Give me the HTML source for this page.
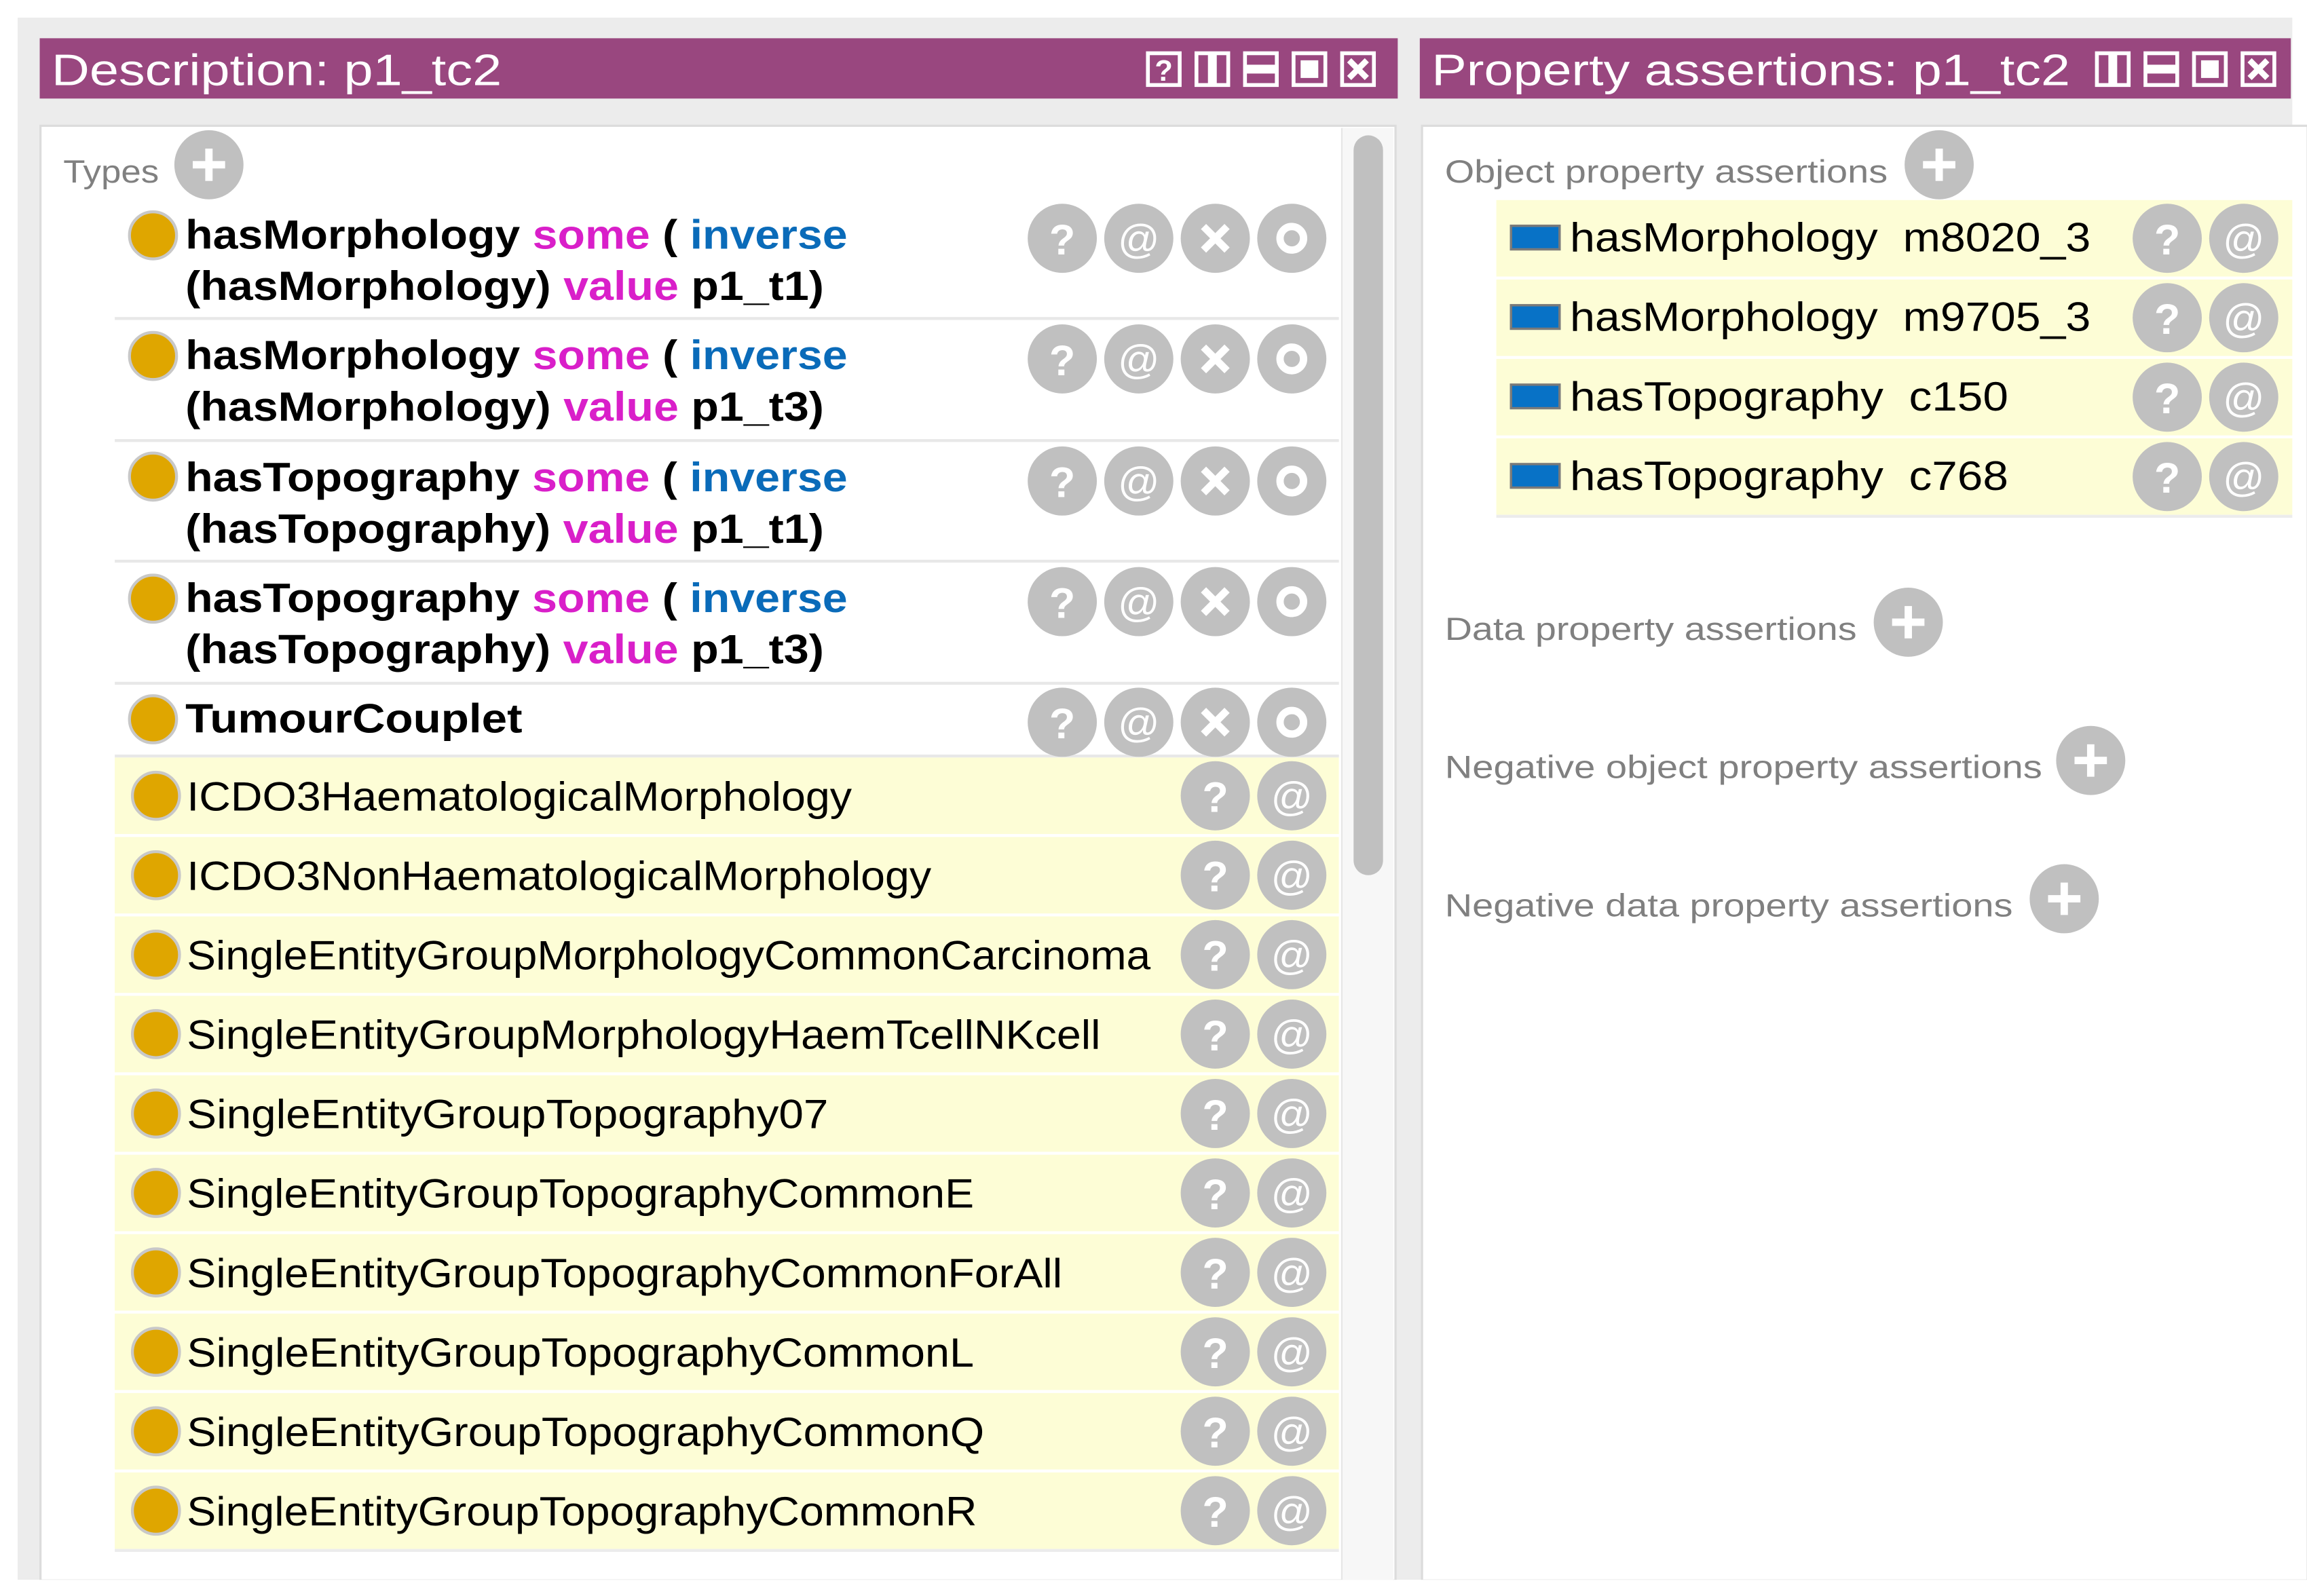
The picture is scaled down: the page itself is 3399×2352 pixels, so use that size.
<!DOCTYPE html>
<html><head><meta charset="utf-8"><style>
html,body{margin:0;padding:0;background:#fff;}
svg{display:block;}
text{font-family:"Liberation Sans",sans-serif;}
</style></head><body>
<svg xmlns="http://www.w3.org/2000/svg" xmlns:xlink="http://www.w3.org/1999/xlink" width="3399" height="2352" viewBox="0 0 1568 1085" preserveAspectRatio="none">
<defs>
  <g id="q"><circle r="23.5" fill="#c0c0c0"/><text y="11" text-anchor="middle" font-size="29" font-weight="bold" fill="#fff">?</text></g>
  <g id="at"><circle r="23.5" fill="#c0c0c0"/><text y="10" text-anchor="middle" font-size="28" fill="#fff">@</text></g>
  <g id="x"><circle r="23.5" fill="#c0c0c0"/><path d="M-8,-8L8,8M8,-8L-8,8" stroke="#fff" stroke-width="5"/></g>
  <g id="o"><circle r="23.5" fill="#c0c0c0"/><circle r="8" fill="none" stroke="#fff" stroke-width="5"/></g>
  <g id="plus"><circle r="23.5" fill="#c0c0c0"/><path d="M-11,0H11M0,-11V11" stroke="#fff" stroke-width="5"/></g>
  <g id="dot"><circle r="16" fill="#dfa600" stroke="#c8c8c8" stroke-width="2"/></g>
  <g id="blue"><rect x="1027" y="153.5" width="33" height="16" fill="#0872c6" stroke="#7a7a7a" stroke-width="1.6"/></g>
  <g id="ib"><rect x="1.2" y="1.2" width="21.6" height="21.6" fill="none" stroke="#fff" stroke-width="2.6"/></g>
</defs>
<rect width="1568" height="1085" fill="#fff"/>
<rect x="12" y="12" width="1546" height="1062" fill="#ececec"/>
<rect x="27" y="26" width="923" height="41" fill="#99477f"/>
<text x="35" y="58" font-size="30" fill="#fff" textLength="306" lengthAdjust="spacingAndGlyphs">Description: p1_tc2</text>
<rect x="965" y="26" width="592" height="41" fill="#99477f"/>
<text x="973" y="58" font-size="30" fill="#fff" textLength="434" lengthAdjust="spacingAndGlyphs">Property assertions: p1_tc2</text>
<g transform="translate(779,35)"><use xlink:href="#ib"/><text x="12" y="20" text-anchor="middle" font-size="20" font-weight="bold" fill="#fff">?</text></g>
<g transform="translate(812,35)"><use xlink:href="#ib"/><rect x="9" y="1" width="6" height="22" fill="#fff"/></g>
<g transform="translate(845,35)"><use xlink:href="#ib"/><rect x="1" y="9" width="22" height="6" fill="#fff"/></g>
<g transform="translate(878,35)"><use xlink:href="#ib"/><rect x="6" y="6" width="12" height="12" fill="#fff"/></g>
<g transform="translate(911,35)"><use xlink:href="#ib"/><path d="M6,6L18,18M18,6L6,18" stroke="#fff" stroke-width="4"/></g>
<g transform="translate(1424,35)"><use xlink:href="#ib"/><rect x="9" y="1" width="6" height="22" fill="#fff"/></g>
<g transform="translate(1457,35)"><use xlink:href="#ib"/><rect x="1" y="9" width="22" height="6" fill="#fff"/></g>
<g transform="translate(1490,35)"><use xlink:href="#ib"/><rect x="6" y="6" width="12" height="12" fill="#fff"/></g>
<g transform="translate(1523,35)"><use xlink:href="#ib"/><path d="M6,6L18,18M18,6L6,18" stroke="#fff" stroke-width="4"/></g>
<rect x="27.5" y="85.5" width="921" height="989" fill="#fff" stroke="#dcdcdc" stroke-width="1.5"/>
<rect x="966.5" y="85.5" width="602" height="989" fill="#fff" stroke="#dcdcdc" stroke-width="1.5"/>
<rect x="912" y="87" width="35" height="987" fill="#f7f7f7"/>
<line x1="912" y1="87" x2="912" y2="1074" stroke="#e6e6e6" stroke-width="1"/>
<rect x="920" y="92" width="20" height="503" rx="10" fill="#c0c0c0"/>
<rect x="0" y="1074" width="1568" height="11" fill="#fff"/>
<text x="43" y="124" font-size="22" fill="#808080" textLength="65" lengthAdjust="spacingAndGlyphs">Types</text>
<use xlink:href="#plus" x="142" y="112"/>
<g font-size="28" font-weight="bold" fill="#000">
<line x1="78" y1="216.5" x2="910" y2="216.5" stroke="#e8e8e8" stroke-width="2"/>
<line x1="78" y1="299.5" x2="910" y2="299.5" stroke="#e8e8e8" stroke-width="2"/>
<line x1="78" y1="381.5" x2="910" y2="381.5" stroke="#e8e8e8" stroke-width="2"/>
<line x1="78" y1="464.5" x2="910" y2="464.5" stroke="#e8e8e8" stroke-width="2"/>
<line x1="78" y1="514" x2="910" y2="514" stroke="#e8e8e8" stroke-width="2"/>
<use xlink:href="#dot" x="104" y="160"/>
<text x="126" y="169" textLength="450" lengthAdjust="spacingAndGlyphs">hasMorphology <tspan fill="#d91fc9">some</tspan> ( <tspan fill="#0a6bb9">inverse</tspan></text>
<text x="126" y="204" textLength="434" lengthAdjust="spacingAndGlyphs">(hasMorphology) <tspan fill="#d91fc9">value</tspan> p1_t1)</text>
<use xlink:href="#dot" x="104" y="242"/>
<text x="126" y="251" textLength="450" lengthAdjust="spacingAndGlyphs">hasMorphology <tspan fill="#d91fc9">some</tspan> ( <tspan fill="#0a6bb9">inverse</tspan></text>
<text x="126" y="286" textLength="434" lengthAdjust="spacingAndGlyphs">(hasMorphology) <tspan fill="#d91fc9">value</tspan> p1_t3)</text>
<use xlink:href="#dot" x="104" y="324"/>
<text x="126" y="334" textLength="450" lengthAdjust="spacingAndGlyphs">hasTopography <tspan fill="#d91fc9">some</tspan> ( <tspan fill="#0a6bb9">inverse</tspan></text>
<text x="126" y="369" textLength="434" lengthAdjust="spacingAndGlyphs">(hasTopography) <tspan fill="#d91fc9">value</tspan> p1_t1)</text>
<use xlink:href="#dot" x="104" y="407"/>
<text x="126" y="416" textLength="450" lengthAdjust="spacingAndGlyphs">hasTopography <tspan fill="#d91fc9">some</tspan> ( <tspan fill="#0a6bb9">inverse</tspan></text>
<text x="126" y="451" textLength="434" lengthAdjust="spacingAndGlyphs">(hasTopography) <tspan fill="#d91fc9">value</tspan> p1_t3)</text>
<use xlink:href="#dot" x="104" y="489"/>
<text x="126" y="498" textLength="229" lengthAdjust="spacingAndGlyphs">TumourCouplet</text>
</g>
<g>
<use xlink:href="#q" x="722" y="162"/><use xlink:href="#at" x="774" y="162"/><use xlink:href="#x" x="826" y="162"/><use xlink:href="#o" x="878" y="162"/>
<use xlink:href="#q" x="722" y="244"/><use xlink:href="#at" x="774" y="244"/><use xlink:href="#x" x="826" y="244"/><use xlink:href="#o" x="878" y="244"/>
<use xlink:href="#q" x="722" y="327"/><use xlink:href="#at" x="774" y="327"/><use xlink:href="#x" x="826" y="327"/><use xlink:href="#o" x="878" y="327"/>
<use xlink:href="#q" x="722" y="409"/><use xlink:href="#at" x="774" y="409"/><use xlink:href="#x" x="826" y="409"/><use xlink:href="#o" x="878" y="409"/>
<use xlink:href="#q" x="722" y="491"/><use xlink:href="#at" x="774" y="491"/><use xlink:href="#x" x="826" y="491"/><use xlink:href="#o" x="878" y="491"/>
</g>
<g font-size="28" fill="#000">
<rect x="78" y="515" width="832" height="52" fill="#fdfdd6"/>
<rect x="78" y="569" width="832" height="52" fill="#fdfdd6"/>
<rect x="78" y="623" width="832" height="52" fill="#fdfdd6"/>
<rect x="78" y="677" width="832" height="52" fill="#fdfdd6"/>
<rect x="78" y="731" width="832" height="52" fill="#fdfdd6"/>
<rect x="78" y="785" width="832" height="52" fill="#fdfdd6"/>
<rect x="78" y="839" width="832" height="52" fill="#fdfdd6"/>
<rect x="78" y="893" width="832" height="52" fill="#fdfdd6"/>
<rect x="78" y="947" width="832" height="52" fill="#fdfdd6"/>
<rect x="78" y="1001" width="832" height="52" fill="#fdfdd6"/>
<rect x="78" y="1053" width="832" height="2" fill="#ececec"/>
<use xlink:href="#dot" x="106" y="541"/><text x="127" y="551" textLength="452" lengthAdjust="spacingAndGlyphs">ICDO3HaematologicalMorphology</text>
<use xlink:href="#dot" x="106" y="595"/><text x="127" y="605" textLength="506" lengthAdjust="spacingAndGlyphs">ICDO3NonHaematologicalMorphology</text>
<use xlink:href="#dot" x="106" y="649"/><text x="127" y="659" textLength="655" lengthAdjust="spacingAndGlyphs">SingleEntityGroupMorphologyCommonCarcinoma</text>
<use xlink:href="#dot" x="106" y="703"/><text x="127" y="713" textLength="621" lengthAdjust="spacingAndGlyphs">SingleEntityGroupMorphologyHaemTcellNKcell</text>
<use xlink:href="#dot" x="106" y="757"/><text x="127" y="767" textLength="436" lengthAdjust="spacingAndGlyphs">SingleEntityGroupTopography07</text>
<use xlink:href="#dot" x="106" y="811"/><text x="127" y="821" textLength="535" lengthAdjust="spacingAndGlyphs">SingleEntityGroupTopographyCommonE</text>
<use xlink:href="#dot" x="106" y="865"/><text x="127" y="875" textLength="595" lengthAdjust="spacingAndGlyphs">SingleEntityGroupTopographyCommonForAll</text>
<use xlink:href="#dot" x="106" y="919"/><text x="127" y="929" textLength="535" lengthAdjust="spacingAndGlyphs">SingleEntityGroupTopographyCommonL</text>
<use xlink:href="#dot" x="106" y="973"/><text x="127" y="983" textLength="542" lengthAdjust="spacingAndGlyphs">SingleEntityGroupTopographyCommonQ</text>
<use xlink:href="#dot" x="106" y="1027"/><text x="127" y="1037" textLength="537" lengthAdjust="spacingAndGlyphs">SingleEntityGroupTopographyCommonR</text>
</g>
<g>
<use xlink:href="#q" x="826" y="541"/><use xlink:href="#at" x="878" y="541"/>
<use xlink:href="#q" x="826" y="595"/><use xlink:href="#at" x="878" y="595"/>
<use xlink:href="#q" x="826" y="649"/><use xlink:href="#at" x="878" y="649"/>
<use xlink:href="#q" x="826" y="703"/><use xlink:href="#at" x="878" y="703"/>
<use xlink:href="#q" x="826" y="757"/><use xlink:href="#at" x="878" y="757"/>
<use xlink:href="#q" x="826" y="811"/><use xlink:href="#at" x="878" y="811"/>
<use xlink:href="#q" x="826" y="865"/><use xlink:href="#at" x="878" y="865"/>
<use xlink:href="#q" x="826" y="919"/><use xlink:href="#at" x="878" y="919"/>
<use xlink:href="#q" x="826" y="973"/><use xlink:href="#at" x="878" y="973"/>
<use xlink:href="#q" x="826" y="1027"/><use xlink:href="#at" x="878" y="1027"/>
</g>
<g font-size="22" fill="#808080">
<text x="982" y="124" textLength="301" lengthAdjust="spacingAndGlyphs">Object property assertions</text>
<text x="982" y="435" textLength="280" lengthAdjust="spacingAndGlyphs">Data property assertions</text>
<text x="982" y="529" textLength="406" lengthAdjust="spacingAndGlyphs">Negative object property assertions</text>
<text x="982" y="623" textLength="386" lengthAdjust="spacingAndGlyphs">Negative data property assertions</text>
</g>
<use xlink:href="#plus" x="1318" y="112"/>
<use xlink:href="#plus" x="1297" y="423"/>
<use xlink:href="#plus" x="1421" y="517"/>
<use xlink:href="#plus" x="1403" y="611"/>
<g font-size="28" fill="#000">
<rect x="1017" y="136" width="541" height="52" fill="#fdfdd6"/>
<rect x="1017" y="190" width="541" height="52" fill="#fdfdd6"/>
<rect x="1017" y="244" width="541" height="52" fill="#fdfdd6"/>
<rect x="1017" y="298" width="541" height="52" fill="#fdfdd6"/>
<rect x="1017" y="350" width="541" height="2" fill="#ececec"/>
<use xlink:href="#blue"/><text x="1067" y="171" textLength="354" lengthAdjust="spacingAndGlyphs">hasMorphology&#160; m8020_3</text>
<use xlink:href="#blue" y="54"/><text x="1067" y="225" textLength="354" lengthAdjust="spacingAndGlyphs">hasMorphology&#160; m9705_3</text>
<use xlink:href="#blue" y="108"/><text x="1067" y="279" textLength="298" lengthAdjust="spacingAndGlyphs">hasTopography&#160; c150</text>
<use xlink:href="#blue" y="162"/><text x="1067" y="333" textLength="298" lengthAdjust="spacingAndGlyphs">hasTopography&#160; c768</text>
</g>
<use xlink:href="#q" x="1473" y="162"/><use xlink:href="#at" x="1525" y="162"/>
<use xlink:href="#q" x="1473" y="216"/><use xlink:href="#at" x="1525" y="216"/>
<use xlink:href="#q" x="1473" y="270"/><use xlink:href="#at" x="1525" y="270"/>
<use xlink:href="#q" x="1473" y="324"/><use xlink:href="#at" x="1525" y="324"/>
</svg>
</body></html>
